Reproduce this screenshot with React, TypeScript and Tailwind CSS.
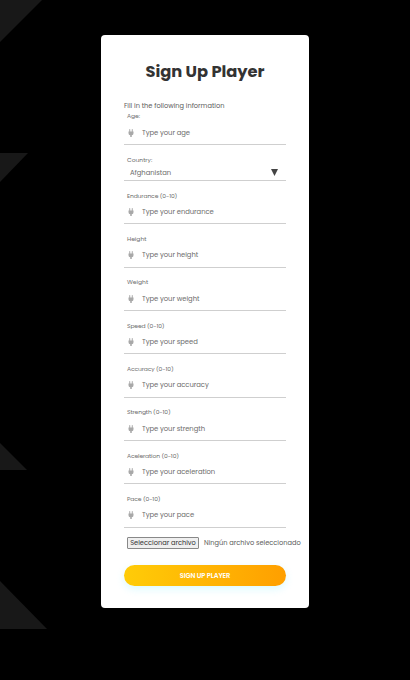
type FieldProps = {
  label: string;
  placeholder: string;
  first?: boolean;
};

function PlugIcon() {
  return (
    <svg className="h-[8px] w-[6px] shrink-0" viewBox="0 0 12 16" fill="#a8a8a8">
      <path d="M2.5 1a1 1 0 0 1 2 0V5h3V1a1 1 0 0 1 2 0V5H11V8.500Q11 12 7.500 12.500V16H4.500V12.500Q1 12 1 8.500V5H2.500Z" />
    </svg>
  );
}

function Field({ label, placeholder, first }: FieldProps) {
  return (
    <div className={first ? "" : "mt-[9.83px]"}>
      <div className={`h-[10px] pl-[3px] text-[6px] leading-[10px] text-[#6c6c6c] ${label.includes("(") ? "tracking-[-0.12px]" : ""}`}>
        <span>{label}</span>
      </div>
      <div className={`flex items-center border-b border-[#cfcfcf] pl-1 ${first ? "h-6" : "h-[23.5px]"}`}>
        <PlugIcon />
        <span className="ml-2 text-[6.8px] leading-[10px] tracking-[-0.03px] text-[#6c6c6c]">{placeholder}</span>
      </div>
    </div>
  );
}

const fields: FieldProps[] = [
  { label: "Endurance (0-10)", placeholder: "Type your endurance" },
  { label: "Height", placeholder: "Type your height" },
  { label: "Weight", placeholder: "Type your weight" },
  { label: "Speed (0-10)", placeholder: "Type your speed" },
  { label: "Accuracy (0-10)", placeholder: "Type your accuracy" },
  { label: "Strength (0-10)", placeholder: "Type your strength" },
  { label: "Aceleration (0-10)", placeholder: "Type your aceleration" },
  { label: "Pace (0-10)", placeholder: "Type your pace" },
];

export default function App() {
  return (
    <div className="relative h-[680px] w-[410px] overflow-hidden bg-black pl-[101px] pt-[35px] font-['Poppins','Inter',sans-serif]">
      <svg className="absolute left-0 top-0" width="60" height="680" fill="#181818">
        <path d="M0 0H42L0 42Z" />
        <path d="M0 153H28L0 182Z" />
        <path d="M0 443L27 470H0Z" />
        <path d="M0 581L47 629H0Z" />
      </svg>
      <main className="relative h-[573px] w-[208px] whitespace-nowrap rounded-[4px] bg-white px-[23px] pt-[25px]">
        <h1 className="h-6 text-center text-[16.3px] font-bold leading-6 tracking-[-0.05px] text-[#333]">
          <span>Sign Up Player</span>
        </h1>
        <p className="mt-4 h-[11px] text-[6.65px] leading-[11px] text-[#5c5c5c]">
          <span>Fill in the following information</span>
        </p>
        <Field first label="Age:" placeholder="Type your age" />
        <div className="mt-[10px]">
          <div className="h-[10px] pl-[3px] text-[6px] leading-[10px] text-[#6c6c6c]">Country:</div>
          <div className="flex h-4 items-center justify-between border-b border-[#cfcfcf] pl-[6px] pr-[8px]">
            <span className="text-[6.8px] leading-[10px] tracking-[-0.03px] text-[#6c6c6c]">Afghanistan</span>
            <svg width="7" height="7" viewBox="0 0 7 7" fill="#444"><path d="M0 0H7L3.5 7Z" /></svg>
          </div>
        </div>
        {fields.map((f) => (
          <Field key={f.label} {...f} />
        ))}
        <div className="mt-[9px] flex h-3 items-center pl-[3px] text-[6.65px] leading-[10px] text-[#5c5c5c]">
          <span className="flex h-3 w-[72px] shrink-0 items-center justify-center rounded-[1px] border border-[#888] bg-[#efefef] text-[#333]">
            Seleccionar archivo
          </span>
          <span className="ml-[5px]">Ningún archivo seleccionado</span>
        </div>
        <button className="mt-4 flex h-[21px] w-full items-center justify-center rounded-full bg-gradient-to-r from-[#ffcc08] to-[#ff9f00] pt-px text-[6.7px] font-semibold tracking-[-0.1px] text-white shadow-[0_3px_8px_rgba(0,220,255,0.15)]">
          <span>SIGN UP PLAYER</span>
        </button>
      </main>
    </div>
  );
}
